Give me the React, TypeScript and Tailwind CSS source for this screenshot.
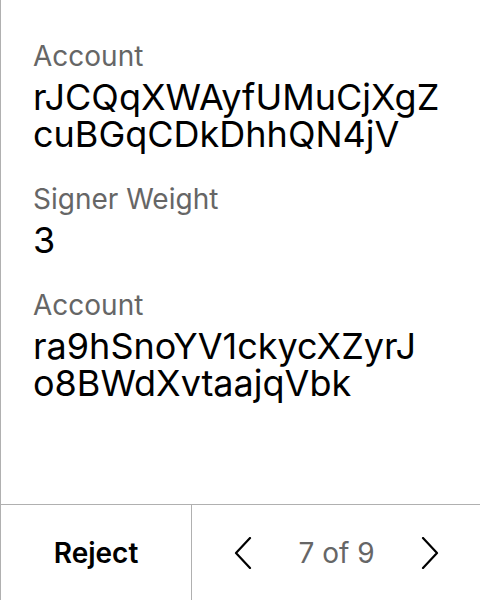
import React from "react";

const font = { fontFamily: "Inter, 'Noto Sans', sans-serif" };

function Field({ label, value }: { label: string; value: string[] }) {
  return (
    <div className="flex flex-col gap-[6px]">
      <div className="text-[28px] leading-[34px] text-[#666666]">{label}</div>
      <div className="text-[36px] leading-[37px] text-black">
        {value.map((v, i) => (
          <div key={i}>{v}</div>
        ))}
      </div>
    </div>
  );
}

export default function App() {
  return (
    <div
      className="w-[480px] h-[600px] bg-white flex flex-col border-l border-[#b0b0b0]"
      style={font}
    >
      <div className="flex-1 flex flex-col gap-[29px] pt-[39px] pl-[32px]">
        <Field label="Account" value={["rJCQqXWAyfUMuCjXgZ", "cuBGqCDkDhhQN4jV"]} />
        <Field label="Signer Weight" value={["3"]} />
        <Field label="Account" value={["ra9hSnoYV1ckycXZyrJ", "o8BWdXvtaajqVbk"]} />
      </div>
      <div className="h-[96px] flex border-t border-[#b0b0b0]">
        <div className="w-[191px] flex items-center justify-center border-r border-[#b0b0b0]">
          <span className="text-[28px] font-semibold text-black">Reject</span>
        </div>
        <div className="flex-1 flex items-center justify-between pl-[42px] pr-[41px]">
          <svg width="18" height="32" viewBox="0 0 18 32" fill="none">
            <polyline points="16,1 2,16 16,31" stroke="black" strokeWidth="2.2" strokeLinecap="round" strokeLinejoin="round" />
          </svg>
          <span className="text-[28px] text-[#666666]">7 of 9</span>
          <svg width="18" height="32" viewBox="0 0 18 32" fill="none">
            <polyline points="2,1 16,16 2,31" stroke="black" strokeWidth="2.2" strokeLinecap="round" strokeLinejoin="round" />
          </svg>
        </div>
      </div>
    </div>
  );
}
